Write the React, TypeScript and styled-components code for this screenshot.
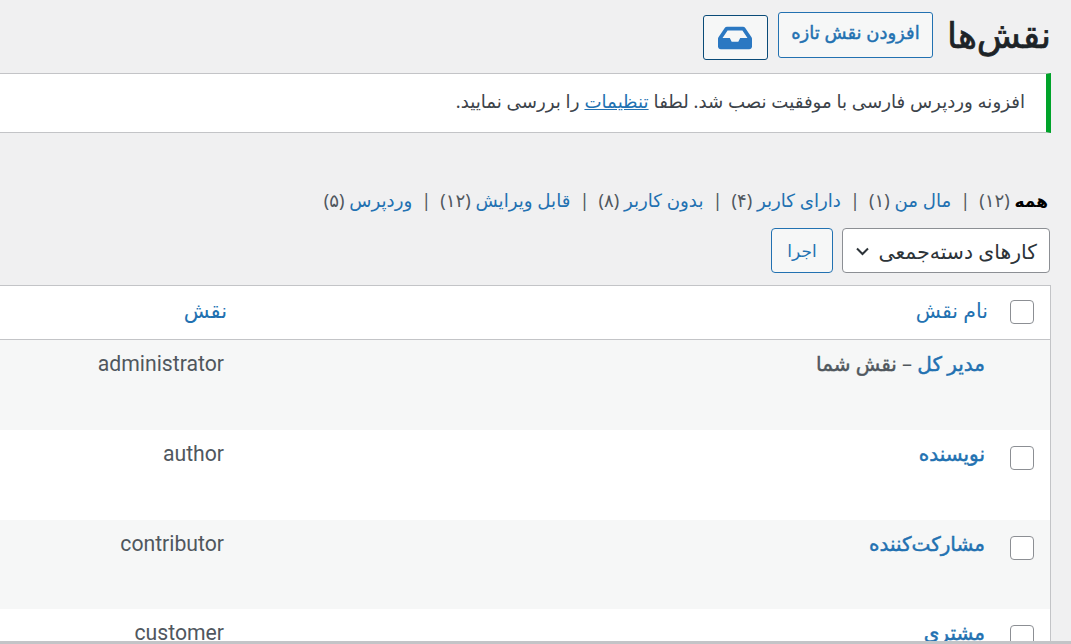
import React from "react";
import styled, { createGlobalStyle } from "styled-components";
import { FaInbox } from "react-icons/fa";

const Global = createGlobalStyle`
  html, body { margin: 0; padding: 0; background: #f0f0f1; height: 100%; overflow: hidden; }
  #root { height: 644px; overflow: hidden; }
  * { box-sizing: border-box; }
`;

const Page = styled.div`
  direction: rtl;
  height: 644px;
  padding: 0 20px 0 0;
  overflow: hidden;
  font-family: "Noto Sans", "DejaVu Sans", sans-serif;
  color: #3c434a;
  font-size: 18px;
  position: relative;
`;

const Header = styled.div`
  display: flex;
  align-items: center;
  height: 73px;
  padding-bottom: 3px;
`;

const Title = styled.h1`
  margin: 0 0 0 14px;
  font-size: 36px;
  font-weight: 400;
  -webkit-text-stroke: 0.7px #1d2327;
  color: #1d2327;
  line-height: 44px;
`;

const AddButton = styled.a`
  display: flex;
  align-items: center;
  justify-content: center;
  width: 155px;
  height: 46px;
  padding-bottom: 6px;
  border: 1px solid #2271b1;
  border-radius: 3px;
  background: #f6f7f7;
  color: #2271b1;
  font-size: 18px;
  font-weight: 400;
  -webkit-text-stroke: 0.45px #2271b1;
`;

const IconButton = styled.button`
  display: flex;
  align-items: center;
  justify-content: center;
  width: 65px;
  height: 45px;
  margin: 5px 10px 0 0;
  padding: 0;
  border: 1px solid #0a4b78;
  border-radius: 3px;
  background: #f6f7f7;
  color: #2b78c2;
`;

const Notice = styled.div`
  display: flex;
  align-items: center;
  height: 60px;
  margin-left: -10px;
  padding: 0 21px 5px 0;
  background: #fff;
  border: 1px solid #c3c4c7;
  border-right: 5px solid #00a32a;
  border-left: 0;
  font-size: 18.2px;
`;

const NoticeLink = styled.a`
  color: #2271b1;
  text-decoration: underline;
  margin: 0 5px;
`;

const Filters = styled.ul`
  display: flex;
  align-items: center;
  list-style: none;
  margin: 52px 3px 0 0;
  padding: 0;
  height: 30px;
  font-size: 18.2px;
  white-space: nowrap;
`;

const FilterItem = styled.li`
  color: #50575e;
`;

const FilterLink = styled.a<{ $current?: boolean }>`
  color: ${(p) => (p.$current ? "#000" : "#2271b1")};
  font-weight: ${(p) => (p.$current ? 600 : 400)};
  font-size: ${(p) => (p.$current ? "17px" : "inherit")};
`;

const Sep = styled.span`
  margin: 0 9px;
  color: #50575e;
`;

const Actions = styled.div`
  display: flex;
  align-items: center;
  gap: 9px;
  margin: 13px 1px 0 0;
  height: 45px;
`;

const Bulk = styled.div`
  display: flex;
  align-items: center;
  justify-content: space-between;
  width: 208px;
  height: 45px;
  padding: 0 12px 0 12px;
  background: #fff;
  border: 1px solid #8c8f94;
  border-radius: 4px;
  color: #2c3338;
  font-size: 20.4px;
`;

const Apply = styled.button`
  width: 62px;
  height: 45px;
  padding: 0;
  border: 1px solid #2271b1;
  border-radius: 4px;
  background: #f6f7f7;
  color: #2271b1;
  font-family: inherit;
  font-size: 17px;
`;

const Table = styled.div`
  margin-top: 12px;
  margin-left: -10px;
  background: #fff;
  border: 1px solid #c3c4c7;
  border-bottom: 0;
`;

const HeadRow = styled.div`
  display: grid;
  grid-template-columns: 62px 1fr 237px;
  height: 54px;
  border-bottom: 1px solid #c3c4c7;
  align-items: center;
  color: #2271b1;
  font-size: 20.5px;
`;

const Row = styled.div<{ $alt?: boolean }>`
  display: grid;
  grid-template-columns: 62px 1fr 237px;
  height: 89.75px;
  background: ${(p) => (p.$alt ? "#f6f7f7" : "#fff")};
  align-items: start;
`;

const CheckCell = styled.div`
  display: flex;
  padding-right: 16px;
`;

const Check = styled.span<{ $row?: boolean }>`
  display: block;
  width: 24px;
  height: 24px;
  margin-top: ${(p) => (p.$row ? "16px" : "-1px")};
  background: #fff;
  border: 1px solid #8c8f94;
  border-radius: 4px;
`;

const NameCell = styled.div`
  padding: 9px 3px 0 0;
  font-weight: 400;
  font-size: 20px;
  -webkit-text-stroke: 0.45px currentColor;
  line-height: 30px;
  color: #50575e;
`;

const NameLink = styled.a`
  color: #2271b1;
`;

const Dash = styled.span`
  -webkit-text-stroke: 0;
`;

const SlugCell = styled.div`
  direction: ltr;
  text-align: right;
  grid-column: 3;
  padding: 9px 4px 0 0;
  line-height: 30px;
  font-family: Roboto, sans-serif;
  font-size: 21.2px;
  color: #50575e;
`;

const HeadName = styled.div`
  padding-bottom: 5px;
`;
const HeadRole = styled.div`
  grid-column: 3;
  padding: 0 1px 5px 0;
  font-size: 21px;
`;

const BottomBar = styled.div`
  position: absolute;
  left: 0;
  right: 0;
  bottom: 0;
  height: 3px;
  background: #c3c4c7;
`;

const Chevron = () => (
  <svg width="15" height="14" viewBox="0 0 15 14" fill="none">
    <path d="M2 4.5 7.5 10 13 4.5" stroke="#2c3338" strokeWidth="2" />
  </svg>
);

const filters = [
  ["مال من", "۱"],
  ["دارای کاربر", "۴"],
  ["بدون کاربر", "۸"],
  ["قابل ویرایش", "۱۲"],
  ["وردپرس", "۵"],
];

const roles = [
  { name: "نویسنده", slug: "author", alt: false },
  { name: "مشارکت‌کننده", slug: "contributor", alt: true },
  { name: "مشتری", slug: "customer", alt: false },
];

export default function App() {
  return (
    <Page>
      <Global />
      <Header>
        <Title>نقش‌ها</Title>
        <AddButton>افزودن نقش تازه</AddButton>
        <IconButton>
          <FaInbox size={34} />
        </IconButton>
      </Header>
      <Notice>
        افزونه وردپرس فارسی با موفقیت نصب شد. لطفا
        <NoticeLink>تنظیمات</NoticeLink>
        را بررسی نمایید.
      </Notice>
      <Filters>
        <FilterItem>
          <FilterLink $current>همه</FilterLink> (۱۲)
        </FilterItem>
        {filters.map(([label, count]) => (
          <FilterItem key={label}>
            <Sep>|</Sep>
            <FilterLink>{label}</FilterLink> ({count})
          </FilterItem>
        ))}
      </Filters>
      <Actions>
        <Bulk>
          کارهای دسته‌جمعی
          <Chevron />
        </Bulk>
        <Apply>اجرا</Apply>
      </Actions>
      <Table>
        <HeadRow>
          <CheckCell>
            <Check />
          </CheckCell>
          <HeadName>نام نقش</HeadName>
          <HeadRole>نقش</HeadRole>
        </HeadRow>
        <Row $alt>
          <div />
          <NameCell>
            <NameLink>مدیر کل</NameLink> <Dash>–</Dash> نقش شما
          </NameCell>
          <SlugCell>administrator</SlugCell>
        </Row>
        {roles.map((r) => (
          <Row key={r.slug} $alt={r.alt}>
            <CheckCell>
              <Check $row />
            </CheckCell>
            <NameCell>
              <NameLink>{r.name}</NameLink>
            </NameCell>
            <SlugCell>{r.slug}</SlugCell>
          </Row>
        ))}
      </Table>
      <BottomBar />
    </Page>
  );
}
